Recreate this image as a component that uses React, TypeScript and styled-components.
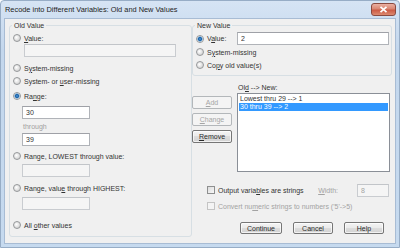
import React from "react";
import styled, { createGlobalStyle } from "styled-components";

const GlobalStyle = createGlobalStyle`
  html, body {
    margin: 0;
    padding: 0;
    background: #ffffff;
  }
  body {
    font-family: "Liberation Sans", Arial, sans-serif;
    font-size: 7px;
    color: #333333;
  }
  * {
    box-sizing: border-box;
  }
`;

const App = () => {
  return (
    <>
      <GlobalStyle />
      <StyledWindow>
        <StyledTitleBar>
          <span>Recode into Different Variables: Old and New Values</span>
          <StyledClose>
            <svg width="9" height="7" viewBox="0 0 9 7">
              <path d="M1.5 0.8 L7.5 6.2 M7.5 0.8 L1.5 6.2" stroke="#ffffff" strokeWidth="1.7" />
            </svg>
          </StyledClose>
        </StyledTitleBar>

        <StyledBody>
          <StyledGroup $height={216}>
            <StyledLegend>Old Value</StyledLegend>
            <StyledRadioRow $top={2}>
              <StyledRadio />
              <span>
                <U>V</U>alue:
              </span>
            </StyledRadioRow>
            <StyledField $left={14} $width={152} $disabled readOnly value="" />
            <StyledRadioRow $top={5}>
              <StyledRadio />
              <span>
                S<U>y</U>stem-missing
              </span>
            </StyledRadioRow>
            <StyledRadioRow $top={1}>
              <StyledRadio />
              <span>
                System- or <U>u</U>ser-missing
              </span>
            </StyledRadioRow>
            <StyledRadioRow $top={3}>
              <StyledRadio $checked />
              <span>
                Ra<U>n</U>ge:
              </span>
            </StyledRadioRow>
            <StyledField $left={12} $width={68} $top={4} readOnly value="30" />
            <StyledThrough>through</StyledThrough>
            <StyledField $left={12} $width={68} $top={2} readOnly value="39" />
            <StyledRadioRow $top={4}>
              <StyledRadio />
              <span>Range, LOWEST through value:</span>
            </StyledRadioRow>
            <StyledField $left={12} $width={68} $top={2} $disabled readOnly value="" />
            <StyledRadioRow $top={5}>
              <StyledRadio />
              <span>
                Range, valu<U>e</U> through HIGHEST:
              </span>
            </StyledRadioRow>
            <StyledField $left={12} $width={68} $top={3} $disabled readOnly value="" />
            <StyledRadioRow $top={9}>
              <StyledRadio />
              <span>
                All <U>o</U>ther values
              </span>
            </StyledRadioRow>
          </StyledGroup>

          <StyledRight>
            <StyledGroup $height={55}>
              <StyledLegend>New Value</StyledLegend>
              <StyledValueRow>
                <StyledRadio $checked />
                <span>
                  V<U>a</U>lue:
                </span>
                <StyledField $width={152} $push readOnly value="2" />
              </StyledValueRow>
              <StyledRadioRow $top={1}>
                <StyledRadio />
                <span>
                  S<U>y</U>stem-missing
                </span>
              </StyledRadioRow>
              <StyledRadioRow $top={1}>
                <StyledRadio />
                <span>
                  Co<U>p</U>y old value(s)
                </span>
              </StyledRadioRow>
            </StyledGroup>

            <StyledMiddle>
              <StyledSideButtons>
                <StyledButton disabled>
                  <U>A</U>dd
                </StyledButton>
                <StyledButton disabled>
                  <U>C</U>hange
                </StyledButton>
                <StyledButton>
                  <U>R</U>emove
                </StyledButton>
              </StyledSideButtons>
              <div>
                <StyledListLabel>
                  Ol<U>d</U> --&gt; New:
                </StyledListLabel>
                <StyledList>
                  <StyledItem>Lowest thru 29 --&gt; 1</StyledItem>
                  <StyledItem $selected>30 thru 39 --&gt; 2</StyledItem>
                </StyledList>
              </div>
            </StyledMiddle>

            <StyledCheckRow>
              <StyledCheck />
              <span>
                Output varia<U>b</U>les are strings
              </span>
              <StyledWidthLabel>
                <U>W</U>idth:
              </StyledWidthLabel>
              <StyledField $width={32} $disabled $grayText readOnly value="8" />
            </StyledCheckRow>
            <StyledConvertRow>
              <StyledCheck $disabled />
              <span>
                Convert nu<U>m</U>eric strings to numbers ('5'-&gt;5)
              </span>
            </StyledConvertRow>

            <StyledFooter>
              <StyledButton $wide>Continue</StyledButton>
              <StyledButton>Cancel</StyledButton>
              <StyledButton>Help</StyledButton>
            </StyledFooter>
          </StyledRight>
        </StyledBody>
      </StyledWindow>
    </>
  );
};

export default App;

const U = styled.span`
  text-decoration: underline;
  text-underline-offset: 1px;
`;

const StyledWindow = styled.div`
  width: 400px;
  height: 248px;
  display: flex;
  flex-direction: column;
  background: linear-gradient(#d6e4f4, #c3d7ed 20%, #c6daef);
  border: 1px solid #97adc6;
  border-radius: 4px 4px 0 0;
`;

const StyledTitleBar = styled.div`
  height: 17px;
  display: flex;
  align-items: center;
  justify-content: space-between;
  padding: 0 3px 0 4px;
  font-size: 7.4px;
  color: #222222;
`;

const StyledClose = styled.div`
  width: 25px;
  height: 13px;
  display: flex;
  align-items: center;
  justify-content: center;
  border: 1px solid #8a4a40;
  border-radius: 3px;
  background: linear-gradient(#eab0a2, #d98672 45%, #cc5a44 55%, #dc8a70);
`;

const StyledBody = styled.div`
  flex: 1;
  margin: 0 3px 3px;
  display: grid;
  grid-template-columns: 183px 200px;
  align-content: start;
  padding: 2px 0 0 4px;
  background: #f0f0f0;
  border: 1px solid #a8bcd4;
`;

const StyledGroup = styled.fieldset<{ $height: number }>`
  margin: 0;
  padding: 0;
  min-width: 0;
  height: ${(p) => p.$height}px;
  border: 1px solid #d7dfe4;
  border-radius: 3px;
  display: flex;
  flex-direction: column;
  align-items: flex-start;
`;

const StyledLegend = styled.legend`
  margin-left: 2px;
  padding: 0 2px;
  line-height: 9px;
  font-size: 7px;
`;

const StyledRadioRow = styled.div<{ $top?: number }>`
  height: 12px;
  margin-top: ${(p) => p.$top ?? 0}px;
  padding-left: 3px;
  display: flex;
  align-items: center;
  gap: 3px;
  white-space: nowrap;
`;

const StyledValueRow = styled.div`
  height: 13px;
  margin-top: 2px;
  padding-left: 3px;
  padding-right: 2px;
  align-self: stretch;
  display: flex;
  align-items: center;
  gap: 3px;
`;

const StyledRadio = styled.span<{ $checked?: boolean }>`
  width: 8px;
  height: 8px;
  flex: none;
  border-radius: 50%;
  border: 1px solid #96989a;
  background: ${(p) =>
    p.$checked
      ? "radial-gradient(circle, #4a97da 0, #2266a8 1.6px, #86b8e2 2.4px, #f3f3f3 3px)"
      : "radial-gradient(circle at 40% 40%, #ffffff 0, #e8e8e8 2px, #d2d2d2 4px)"};
`;

const StyledCheck = styled.span<{ $disabled?: boolean }>`
  width: 8px;
  height: 8px;
  flex: none;
  border: 1px solid ${(p) => (p.$disabled ? "#c4c4c4" : "#8e8f8f")};
  background: ${(p) =>
    p.$disabled ? "#f4f4f4" : "linear-gradient(135deg, #dcdcdc, #f8f8f8)"};
`;

const StyledField = styled.input<{
  $left?: number;
  $top?: number;
  $width: number;
  $disabled?: boolean;
  $grayText?: boolean;
  $push?: boolean;
}>`
  width: ${(p) => p.$width}px;
  height: 13px;
  margin: ${(p) => p.$top ?? 0}px 0 0 ${(p) => (p.$push ? "auto" : `${p.$left ?? 0}px`)};
  padding: 0 0 0 3px;
  font: inherit;
  font-size: 7px;
  color: ${(p) => (p.$grayText ? "#a3a3a3" : "#333333")};
  background: ${(p) => (p.$disabled ? "#f5f5f5" : "#ffffff")};
  border: 1px solid ${(p) => (p.$disabled ? "#c9ccd0" : "#b0b3b8")};
  border-top-color: ${(p) => (p.$disabled ? "#c2c5c9" : "#9fa1a7")};
  outline: none;
  flex: none;
`;

const StyledThrough = styled.div`
  margin: 3px 0 0 13px;
  line-height: 9px;
  height: 9px;
  color: #a0a0a0;
`;

const StyledRight = styled.div`
  display: flex;
  flex-direction: column;
`;

const StyledMiddle = styled.div`
  display: grid;
  grid-template-columns: 40px 153px;
  column-gap: 5px;
`;

const StyledSideButtons = styled.div`
  margin-top: 20px;
  display: flex;
  flex-direction: column;
  gap: 4px;
`;

const StyledButton = styled.button<{ $wide?: boolean }>`
  width: ${(p) => (p.$wide ? 42 : 40)}px;
  height: 13px;
  padding: 0;
  font: inherit;
  font-size: 7px;
  color: #2a2a2a;
  border: 1px solid #767676;
  border-radius: 2px;
  background: linear-gradient(#f4f4f4, #ebebeb 45%, #dddddd 50%, #d2d2d2);
  box-shadow: inset 0 0 0 1px rgba(255, 255, 255, 0.7);

  &:disabled {
    color: #a6a6a6;
    border-color: #b3b7ba;
    background: #f4f4f4;
    box-shadow: none;
  }
`;

const StyledListLabel = styled.div`
  margin: 7px 0 0 1px;
  line-height: 9px;
  height: 9px;
`;

const StyledList = styled.div`
  margin-top: 1px;
  height: 79px;
  padding: 1px;
  background: #ffffff;
  border: 1px solid #8a8f97;
`;

const StyledItem = styled.div<{ $selected?: boolean }>`
  height: 8px;
  line-height: 8px;
  padding-left: 1px;
  white-space: nowrap;
  color: ${(p) => (p.$selected ? "#ffffff" : "#333333")};
  background: ${(p) => (p.$selected ? "#3399ff" : "transparent")};
`;

const StyledCheckRow = styled.div`
  height: 14px;
  margin-top: 11px;
  padding: 0 3px 0 15px;
  display: flex;
  align-items: center;
  gap: 3px;
  white-space: nowrap;
`;

const StyledWidthLabel = styled.span`
  margin-left: auto;
  margin-right: 16px;
  color: #a3a3a3;
`;

const StyledConvertRow = styled.div`
  height: 10px;
  margin-top: 4px;
  padding-left: 15px;
  display: flex;
  align-items: center;
  gap: 3px;
  white-space: nowrap;
  color: #a3a3a3;
`;

const StyledFooter = styled.div`
  margin-top: 11px;
  padding-right: 8px;
  display: flex;
  justify-content: flex-end;
  gap: 11px;

  button {
    height: 12px;
  }
`;
